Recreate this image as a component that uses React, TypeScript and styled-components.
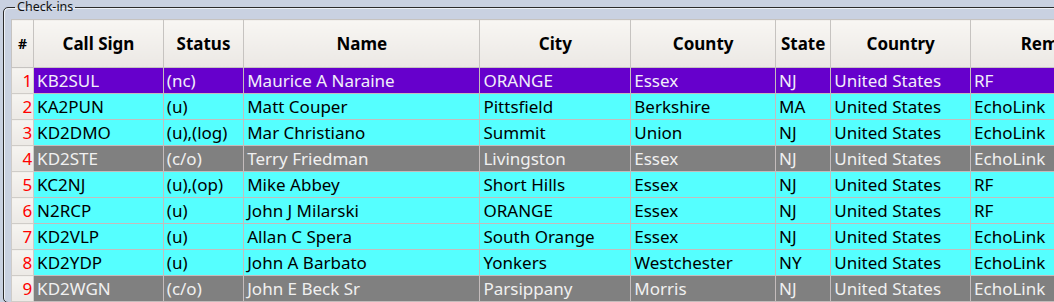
import React, { FC } from 'react';
import styled, { createGlobalStyle, css } from 'styled-components';

const GlobalStyle = createGlobalStyle`
  html, body {
    margin: 0;
    padding: 0;
    background: #c9d1e1;
    overflow: hidden;
    font-family: "Noto Sans", "Open Sans", sans-serif;
  }
`;

const Page = styled.div`
  width: 1054px;
  height: 302px;
  overflow: hidden;
  padding: 1px 0 0 3px;
  box-sizing: border-box;
`;

const GroupBox = styled.fieldset`
  margin: 0;
  padding: 6px 0 0 7px;
  border: 1px solid #2b2b2b;
  border-radius: 5px;
  box-shadow: inset 1px 1px 0 #eef1f7;
  min-width: 0;
  width: 1160px;
`;

const Legend = styled.legend`
  margin-left: 4px;
  padding: 0 2px;
  font-size: 12.5px;
  line-height: 12px;
  color: #111;
`;

const Grid = styled.table`
  border-collapse: collapse;
  table-layout: fixed;
  width: 1135px;
  font-size: 17px;
`;

const HeadCell = styled.th`
  height: 47px;
  padding: 0;
  border: 1px solid #c6c3c0;
  background: linear-gradient(#f8f6f3, #ebe8e4);
  font-weight: bold;
  text-align: center;
  color: #000;
  white-space: nowrap;
  overflow: hidden;
  &:first-child {
    font-size: 14px;
  }
`;

type Tone = 'purple' | 'cyan' | 'gray';

const tones: Record<Tone, ReturnType<typeof css>> = {
  purple: css`
    background: #6600cc;
    color: #f2eefa;
  `,
  cyan: css`
    background: #55ffff;
    color: #000;
  `,
  gray: css`
    background: #808080;
    color: #f0f0f0;
  `,
};

const Cell = styled.td<{ $tone: Tone }>`
  height: 25px;
  padding: 0 0 0 3px;
  border: 1px solid #c4bcbc;
  white-space: nowrap;
  overflow: hidden;
  line-height: 25px;
  ${(p) => tones[p.$tone]}
`;

const NumCell = styled.td`
  height: 25px;
  padding: 0 1px 0 0;
  border: 1px solid #cfccc8;
  background: linear-gradient(#f6f4f1, #ece9e5);
  color: #ff0000;
  text-align: right;
  line-height: 25px;
`;

interface ICheckin {
  call: string;
  status: string;
  name: string;
  city: string;
  county: string;
  state: string;
  country: string;
  remarks: string;
  tone: Tone;
}

const checkins: ICheckin[] = [
  { call: 'KB2SUL', status: '(nc)', name: 'Maurice A Naraine', city: 'ORANGE', county: 'Essex', state: 'NJ', country: 'United States', remarks: 'RF', tone: 'purple' },
  { call: 'KA2PUN', status: '(u)', name: 'Matt Couper', city: 'Pittsfield', county: 'Berkshire', state: 'MA', country: 'United States', remarks: 'EchoLink', tone: 'cyan' },
  { call: 'KD2DMO', status: '(u),(log)', name: 'Mar Christiano', city: 'Summit', county: 'Union', state: 'NJ', country: 'United States', remarks: 'EchoLink', tone: 'cyan' },
  { call: 'KD2STE', status: '(c/o)', name: 'Terry Friedman', city: 'Livingston', county: 'Essex', state: 'NJ', country: 'United States', remarks: 'EchoLink', tone: 'gray' },
  { call: 'KC2NJ', status: '(u),(op)', name: 'Mike Abbey', city: 'Short Hills', county: 'Essex', state: 'NJ', country: 'United States', remarks: 'RF', tone: 'cyan' },
  { call: 'N2RCP', status: '(u)', name: 'John J Milarski', city: 'ORANGE', county: 'Essex', state: 'NJ', country: 'United States', remarks: 'RF', tone: 'cyan' },
  { call: 'KD2VLP', status: '(u)', name: 'Allan C Spera', city: 'South Orange', county: 'Essex', state: 'NJ', country: 'United States', remarks: 'EchoLink', tone: 'cyan' },
  { call: 'KD2YDP', status: '(u)', name: 'John A Barbato', city: 'Yonkers', county: 'Westchester', state: 'NY', country: 'United States', remarks: 'EchoLink', tone: 'cyan' },
  { call: 'KD2WGN', status: '(c/o)', name: 'John E Beck Sr', city: 'Parsippany', county: 'Morris', state: 'NJ', country: 'United States', remarks: 'EchoLink', tone: 'gray' },
];

const columns = [
  { label: '#', width: 22 },
  { label: 'Call Sign', width: 129 },
  { label: 'Status', width: 80 },
  { label: 'Name', width: 235 },
  { label: 'City', width: 150 },
  { label: 'County', width: 144 },
  { label: 'State', width: 55 },
  { label: 'Country', width: 139 },
  { label: 'Remarks', width: 174 },
];

const App: FC = () => {
  return (
    <Page>
      <GlobalStyle />
      <GroupBox>
        <Legend>Check-ins</Legend>
        <Grid>
          <colgroup>
            {columns.map((c) => (
              <col key={c.label} style={{ width: c.width }} />
            ))}
          </colgroup>
          <thead>
            <tr>
              {columns.map((c) => (
                <HeadCell key={c.label}>{c.label}</HeadCell>
              ))}
            </tr>
          </thead>
          <tbody>
            {checkins.map((r, i) => (
              <tr key={r.call}>
                <NumCell>{i + 1}</NumCell>
                <Cell $tone={r.tone}>{r.call}</Cell>
                <Cell $tone={r.tone}>{r.status}</Cell>
                <Cell $tone={r.tone}>{r.name}</Cell>
                <Cell $tone={r.tone}>{r.city}</Cell>
                <Cell $tone={r.tone}>{r.county}</Cell>
                <Cell $tone={r.tone}>{r.state}</Cell>
                <Cell $tone={r.tone}>{r.country}</Cell>
                <Cell $tone={r.tone}>{r.remarks}</Cell>
              </tr>
            ))}
          </tbody>
        </Grid>
      </GroupBox>
    </Page>
  );
};

export default App;
